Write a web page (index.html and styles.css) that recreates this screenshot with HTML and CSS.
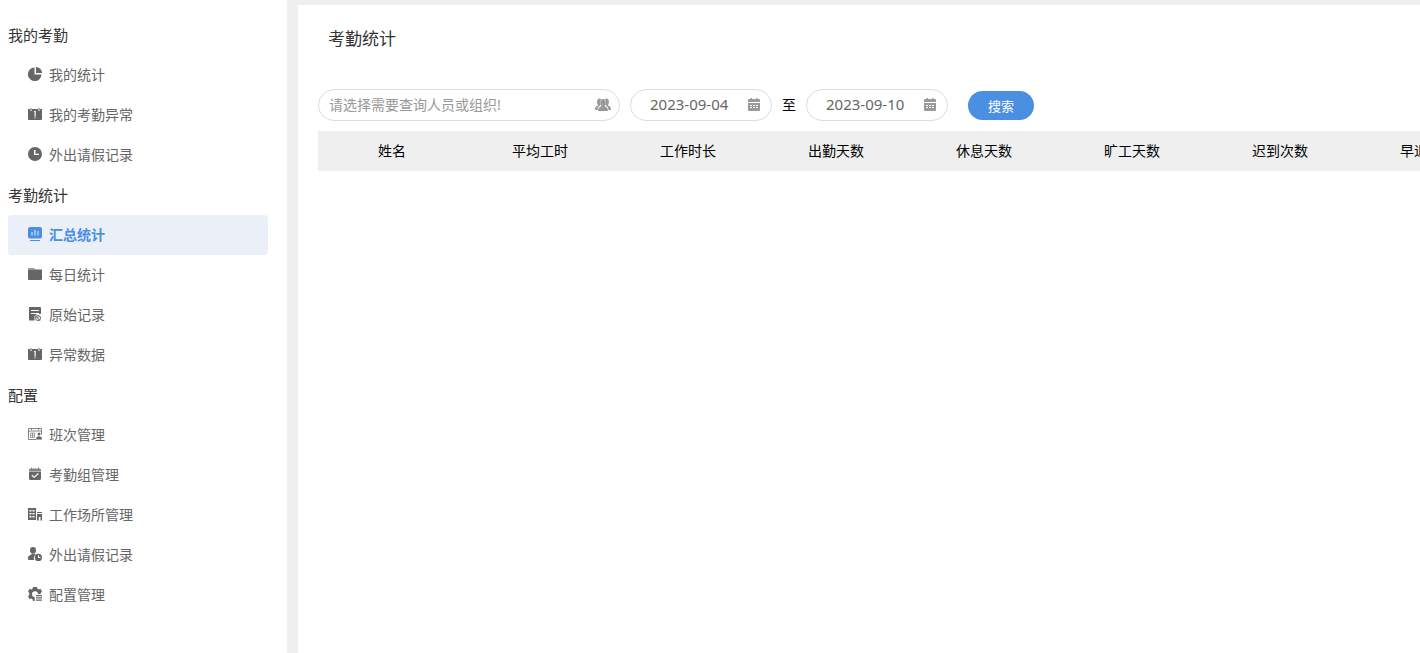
FILE: index.html
```html
<!DOCTYPE html>
<html lang="zh-CN">
<head>
    <meta charset="UTF-8">
    <meta name="viewport" content="width=device-width, initial-scale=1.0">
    <title>考勤统计</title>
    <link rel="stylesheet" href="styles.css">
</head>
<body>
    <!-- Shared icons -->
    <svg class="icon-defs" aria-hidden="true">
        <symbol id="icon-abnormal" viewBox="0 0 14 14">
            <path fill-rule="evenodd" d="M0 2h2v1.500h2V2h6v1.500h2V2h2v10a1 1 0 0 1-1 1H1a1 1 0 0 1-1-1zM6 4v1h.500v4.500h1.200V4zM6.500 10.200v1h1.200v-1z"/>
            <path d="M2.500 1h1v2h-1zM10.500 1h1v2h-1z"/>
        </symbol>
        <symbol id="icon-calendar" viewBox="0 0 14 14">
            <path d="M2 1h1.500V0H5v1h4V0h1.500v1H12a1 1 0 0 1 1 1v2H1V2a1 1 0 0 1 1-1z"/>
            <path fill-rule="evenodd" d="M1 5h12v7a1 1 0 0 1-1 1H2a1 1 0 0 1-1-1zM3 7v1h2V7zm3 0v1h2V7zm3 0v1h2V7zM3 9v1h2V9zm3 0v1h2V9zm3 0v1h2V9z"/>
        </symbol>
    </svg>

    <div class="layout">
        <nav class="sidebar">
            <h2 class="menu-title">我的考勤</h2>
            <ul class="menu">
                <li><a href="#" class="menu-item">
                    <svg class="icon" viewBox="0 0 14 14"><path d="M6.500.5v7h7A6.800 6.800 0 1 1 6.500.5z"/><path d="M8 0a6 6 0 0 1 6 6H8z"/></svg>
                    我的统计</a></li>
                <li><a href="#" class="menu-item">
                    <svg class="icon"><use href="#icon-abnormal"/></svg>
                    我的考勤异常</a></li>
                <li><a href="#" class="menu-item">
                    <svg class="icon" viewBox="0 0 14 14"><path fill-rule="evenodd" d="M7 0a7 7 0 1 1 0 14A7 7 0 0 1 7 0zM6 3v5h5V6.800H7.500V3z"/></svg>
                    外出请假记录</a></li>
            </ul>

            <h2 class="menu-title">考勤统计</h2>
            <ul class="menu">
                <li><a href="#" class="menu-item active">
                    <svg class="icon" viewBox="0 0 14 14"><path fill-rule="evenodd" d="M2 0h10a2 2 0 0 1 2 2v7.500a2 2 0 0 1-2 2H2a2 2 0 0 1-2-2V2a2 2 0 0 1 2-2zM3.500 5v3.500h1V5zm3-2v5.500h1V3zm3 1v4.500h1V4z"/><path d="M2 13h10v1H2z"/></svg>
                    汇总统计</a></li>
                <li><a href="#" class="menu-item">
                    <svg class="icon" viewBox="0 0 14 14"><path opacity=".65" d="M0 1h6l1.500 1.500H0z"/><path d="M0 2.500h14V12a1 1 0 0 1-1 1H1a1 1 0 0 1-1-1z"/></svg>
                    每日统计</a></li>
                <li><a href="#" class="menu-item">
                    <svg class="icon" viewBox="0 0 14 14"><path fill-rule="evenodd" d="M1 0h11a1 1 0 0 1 1 1v6H9L6.500 9v4.500H1zM3 3v1h8V3zm0 3v1h8V6z"/><circle cx="10" cy="11" r="2.500" fill="none" stroke="currentColor"/><path d="M9.500 9.500h1v2h-1zM7 8l5.500 5.500-.5.500L6.500 8.500z"/></svg>
                    原始记录</a></li>
                <li><a href="#" class="menu-item">
                    <svg class="icon"><use href="#icon-abnormal"/></svg>
                    异常数据</a></li>
            </ul>

            <h2 class="menu-title">配置</h2>
            <ul class="menu">
                <li><a href="#" class="menu-item">
                    <svg class="icon" viewBox="0 0 14 14"><path fill="none" stroke="currentColor" stroke-width=".8" d="M8 12.500H.5V1.500h13V8M.5 4h13M3.500 1v2M10.500 1v2"/><path fill="none" stroke="currentColor" stroke-width=".6" d="M2.500 6v4.500M4.500 6v4.500M6.500 6v4.500M2.500 6h4M2.500 8.300h4M2.500 10.500h4"/><circle cx="11" cy="7" r="1.500"/><path d="M8 12.500c0-2 1-3.200 3-3.200s3 1.200 3 3.200z"/></svg>
                    班次管理</a></li>
                <li><a href="#" class="menu-item">
                    <svg class="icon" viewBox="0 0 14 14"><path d="M2.500 1.500H3v-1h1v1h6v-1h1v1h.5A1.500 1.500 0 0 1 13 3v1H1V3a1.500 1.500 0 0 1 1.500-1.500z" opacity=".8"/><path fill-rule="evenodd" d="M1 4.500h12v7a1.500 1.500 0 0 1-1.500 1.500h-9A1.500 1.500 0 0 1 1 11.500zm3.200 3.300-.8.900 2.800 2.400 4.500-4.200-.8-.9-3.700 3.400z"/></svg>
                    考勤组管理</a></li>
                <li><a href="#" class="menu-item">
                    <svg class="icon" viewBox="0 0 14 14"><path fill-rule="evenodd" d="M0 1h8v12H0zM1.500 3v1.500h2V3zm3 0v1.500h2V3zm-3 3v1.500h2V6zm3 0v1.500h2V6zm-3 3v1.500h2V9zm3 0v1.500h2V9z"/><path d="M9 5h5v1H9zM9 7h5v6.500h-1.500V10h-1.700v3.500H9z"/></svg>
                    工作场所管理</a></li>
                <li><a href="#" class="menu-item">
                    <svg class="icon" viewBox="0 0 14 14"><ellipse cx="5" cy="3.300" rx="3" ry="3.300"/><path d="M3.500 6.500h3l1.200 1A4.500 4.500 0 0 0 6.300 13H1a1 1 0 0 1-1-1v-1.500C0 9 2 8 3.500 7.500z"/><path fill-rule="evenodd" d="M10.400 6.800a3.600 3.600 0 1 1 0 7.200 3.600 3.600 0 0 1 0-7.200zM10 8.300V11h2.500v-1H11V8.300z"/></svg>
                    外出请假记录</a></li>
                <li><a href="#" class="menu-item">
                    <svg class="icon" viewBox="0 0 14 14"><path d="M5 0h4l.5 1.800 1 .6 1.900-.6L14 4.700l-1.300 1.300V7H10a3 3 0 1 0-3.300 3.200V14H5l-.5-1.800-1-.6-1.900.6L0 9.300 1.300 8V6L0 4.700l1.600-2.900 1.900.6 1-.6z"/><path d="M8 8h6v1.200H8zM8 10.300h6v1.200H8zM8 12.600h6v1.200H8z"/></svg>
                    配置管理</a></li>
            </ul>
        </nav>

        <main class="content">
            <h1 class="page-title">考勤统计</h1>

            <form class="search-bar">
                <div class="field field-member">
                    <input type="text" aria-label="人员或组织" placeholder="请选择需要查询人员或组织!">
                    <svg class="icon icon-group" viewBox="0 0 16 14"><path d="M4.500.5C5.500.5 6 .8 6 1.500 4.500 3 4.700 5 5.700 6.800L3 9.500 2.500 12H0c0-2.500.5-3.500 3-4.500C1.500 4.500 1.700.5 4.500.5zM11.500.5c-1 0-1.500.3-1.500 1 1.500 1.500 1.300 3.500.3 5.300L13 9.500l.5 2.500H16c0-2.500-.5-3.500-3-4.500C14.500 4.500 14.300.5 11.500.5z"/><ellipse cx="8" cy="4.500" rx="2.800" ry="3.500"/><path d="M6.500 7.500h3c.3 1.500 3.500 1.200 3.500 5.500H3c0-4.300 3.200-4 3.500-5.500z"/></svg>
                </div>
                <div class="field field-date">
                    <input type="text" aria-label="开始日期" value="2023-09-04">
                    <svg class="icon"><use href="#icon-calendar"/></svg>
                </div>
                <span class="separator">至</span>
                <div class="field field-date">
                    <input type="text" aria-label="结束日期" value="2023-09-10">
                    <svg class="icon"><use href="#icon-calendar"/></svg>
                </div>
                <button type="button" class="search-btn">搜索</button>
            </form>

            <div class="table-wrap">
                <table class="stat-table">
                    <thead>
                        <tr>
                            <th>姓名</th>
                            <th>平均工时</th>
                            <th>工作时长</th>
                            <th>出勤天数</th>
                            <th>休息天数</th>
                            <th>旷工天数</th>
                            <th>迟到次数</th>
                            <th>早退次数</th>
                        </tr>
                    </thead>
                </table>
            </div>
        </main>
    </div>
</body>
</html>
```
FILE: styles.css
```css
* {
    margin: 0;
    padding: 0;
    box-sizing: border-box;
}

body {
    font-family: "Noto Sans", "Noto Sans CJK SC", sans-serif;
    font-size: 14px;
    color: #000;
    background-color: #efefef;
}

.icon-defs {
    display: none;
}

.icon {
    flex: none;
    width: 14px;
    height: 14px;
    fill: currentColor;
}

.layout {
    display: flex;
    min-height: 100vh;
}

/* Sidebar */
.sidebar {
    flex: none;
    width: 287px;
    padding: 15px 19px 15px 8px;
    background-color: #fff;
}

.menu {
    list-style: none;
}

.menu-title {
    font-size: 15px;
    font-weight: 400;
    line-height: 40px;
    color: #333;
}

.menu-item {
    display: flex;
    align-items: center;
    gap: 7px;
    height: 40px;
    padding: 0 20px;
    border-radius: 4px;
    line-height: 40px;
    color: #666;
    text-decoration: none;
}

.menu-item .icon {
    margin-bottom: 2px;
}

.menu-item.active {
    background-color: #ebeff7;
    color: #4a90e2;
    font-weight: 700;
}

/* Content */
.content {
    flex: 1;
    min-width: 0;
    margin: 5px 0 0 11px;
    padding: 0 0 20px 20px;
    background-color: #fff;
}

.page-title {
    padding: 14px 10px 30px;
    font-size: 17px;
    font-weight: 400;
    line-height: 40px;
    color: #333;
}

.search-bar {
    display: flex;
    align-items: center;
    margin-bottom: 10px;
}

.field {
    display: flex;
    align-items: center;
    height: 32px;
    border: 1px solid #ddd;
    border-radius: 16px;
    color: #999;
}

.field input {
    flex: 1;
    min-width: 0;
    height: 30px;
    padding-bottom: 2px;
    border: none;
    outline: none;
    background: none;
    font-family: inherit;
    font-size: 14px;
    color: #666;
}

.field input::placeholder {
    color: #999;
}

.field-member {
    width: 302px;
    margin-right: 10px;
    padding: 0 8px 0 10px;
}

.field .icon-group {
    width: 16px;
}

.field-date {
    width: 142px;
    padding: 0 10px 0 19px;
}

.field-date input {
    font-size: 15px;
}

.separator {
    padding: 0 10px 2px;
}

.search-btn {
    height: 29px;
    margin-left: 20px;
    padding: 0 20px;
    border: none;
    border-radius: 15px;
    background-color: #4a90e2;
    color: #fff;
    font-family: inherit;
    font-size: 13px;
    cursor: pointer;
}

.search-btn:hover {
    background-color: #3a80d2;
}

/* Table */
.table-wrap {
    overflow: hidden;
}

.stat-table {
    width: 1184px;
    table-layout: fixed;
    border-collapse: collapse;
}

.stat-table th {
    height: 40px;
    padding-bottom: 2px;
    background-color: #efefef;
    font-weight: 400;
    text-align: center;
}
```
